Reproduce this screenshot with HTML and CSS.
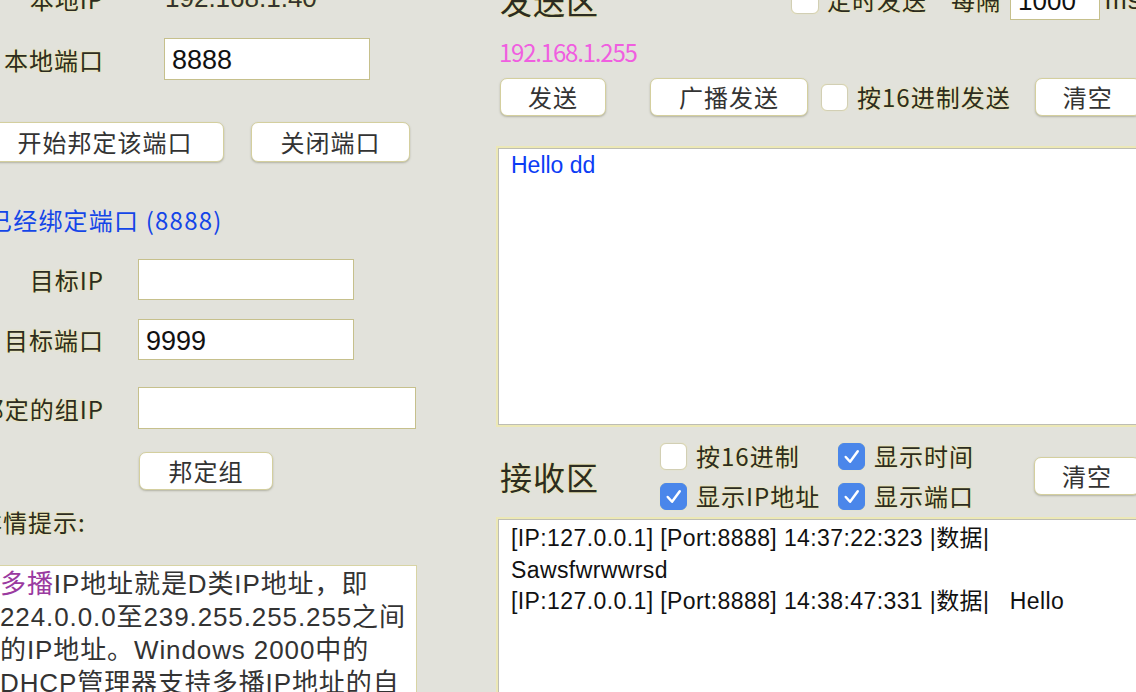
FILE: index.html
```html
<!DOCTYPE html>
<html lang="zh-CN">
<head>
<meta charset="utf-8">
<title>UDP 调试</title>
<link rel="stylesheet" href="styles.css">
</head>
<body>
<div class="app">
  <section class="left">
    <div class="row row-ip">
      <span class="label">本地IP</span>
      <span class="ip-value">192.168.1.40</span>
    </div>
    <div class="row row-port">
      <span class="label">本地端口</span>
      <input class="field field-port" type="text" value="8888">
    </div>
    <div class="row row-btns">
      <button class="btn btn-bind">开始邦定该端口</button>
      <button class="btn btn-close">关闭端口</button>
    </div>
    <div class="status">已经绑定端口 (8888)</div>
    <div class="row row-target first">
      <span class="label">目标IP</span>
      <input class="field field-target" type="text" value="">
    </div>
    <div class="row row-target second">
      <span class="label">目标端口</span>
      <input class="field field-target" type="text" value="9999">
    </div>
    <div class="row row-target group">
      <span class="label">邦定的组IP</span>
      <input class="field field-group" type="text" value="">
    </div>
    <div class="row row-groupbtn">
      <button class="btn btn-group">邦定组</button>
    </div>
    <div class="hint-title">详情提示:</div>
    <div class="hint-box">
      <span class="hl">多播</span>IP地址就是D类IP地址，即<br>224.0.0.0至239.255.255.255之间<br>的IP地址。Windows 2000中的<br>DHCP管理器支持多播IP地址的自<br>动分配。
    </div>
  </section>

  <section class="right">
    <div class="rrow rrow-top">
      <h2 class="title">发送区</h2>
      <span class="check timer-check"></span>
      <span class="clabel timer-label">定时发送</span>
      <span class="clabel every">每隔</span>
      <input class="field field-ms" type="text" value="1000">
      <span class="clabel ms">ms</span>
    </div>
    <div class="bcast">192.168.1.255</div>
    <div class="rrow rrow-send">
      <button class="btn btn-send">发送</button>
      <button class="btn btn-bcast">广播发送</button>
      <span class="check hex-check"></span>
      <span class="clabel hex-label">按16进制发送</span>
      <button class="btn btn-clear">清空</button>
    </div>
    <div class="textbox sendbox"><span class="sendtext">Hello dd</span></div>
    <div class="rrow rrow-recv">
      <h2 class="title">接收区</h2>
      <div class="opts">
        <label class="opt"><span class="check"></span><span class="clabel">按16进制</span></label>
        <label class="opt"><span class="check on"><svg viewBox="0 0 26 26"><path d="M7 13.5 L11.5 18.5 L19.5 7.5"/></svg></span><span class="clabel">显示时间</span></label>
        <label class="opt"><span class="check on"><svg viewBox="0 0 26 26"><path d="M7 13.5 L11.5 18.5 L19.5 7.5"/></svg></span><span class="clabel">显示IP地址</span></label>
        <label class="opt"><span class="check on"><svg viewBox="0 0 26 26"><path d="M7 13.5 L11.5 18.5 L19.5 7.5"/></svg></span><span class="clabel">显示端口</span></label>
      </div>
      <button class="btn btn-clear2">清空</button>
    </div>
    <div class="textbox recvbox">
      <div class="line">[IP:127.0.0.1] [Port:8888] 14:37:22:323 |数据|</div>
      <div class="line">Sawsfwrwwrsd</div>
      <div class="line">[IP:127.0.0.1] [Port:8888] 14:38:47:331 |数据|&nbsp;&nbsp; Hello</div>
    </div>
  </section>
</div>
</body>
</html>
```

FILE: styles.css
```css
html, body {
  margin: 0;
  padding: 0;
}
body {
  width: 1136px;
  height: 692px;
  overflow: hidden;
  background: #e2e2db;
  font-family: "Noto Sans CJK SC", "Liberation Sans", sans-serif;
  color: #2c2c22;
}
.app {
  display: flex;
  align-items: flex-start;
  margin-top: -22px;
  margin-left: -30px;
}
.left {
  width: 447px;
  flex: none;
  display: flex;
  flex-direction: column;
}
.right {
  width: 720px;
  flex: none;
  margin-left: 81px;
  padding-top: 2px;
  display: flex;
  flex-direction: column;
}
.label, .clabel, .title, .status, .hint-title, .ip-value {
  white-space: nowrap;
  text-shadow: 0 0 2px rgba(246, 236, 150, 0.95), 0 0 1px rgba(246, 236, 150, 0.9);
}
.row {
  display: flex;
  align-items: center;
}
.label {
  width: 134px;
  flex: none;
  text-align: right;
  font-size: 24px;
  letter-spacing: 1px;
  margin-right: -1px;
}
.row-ip {
  height: 40px;
}
.ip-value {
  margin-left: 62px;
  font-family: "Liberation Sans", sans-serif;
  font-size: 26px;
  color: #333;
}
.field {
  box-sizing: border-box;
  border: 1px solid #c6c08c;
  background: #fff;
  margin: 0;
  padding: 3px 7px 0;
  font-family: "Liberation Sans", sans-serif;
  font-size: 27px;
  color: #111;
  outline: none;
  border-radius: 0;
}
.row-port {
  margin-top: 20px;
}
.field-port {
  margin-left: 61px;
  width: 206px;
  height: 42px;
}
.btn {
  box-sizing: border-box;
  flex: none;
  background: #fff;
  border: 1px solid #d4cf9e;
  border-radius: 7px;
  box-shadow: 0 1px 2px rgba(90, 90, 60, 0.35);
  font-family: "Noto Sans CJK SC", sans-serif;
  font-size: 24px;
  letter-spacing: 1px;
  color: #333;
  padding: 0;
  margin: 0;
  height: 40px;
  line-height: 36px;
}
.row-btns {
  margin-top: 42px;
}
.btn-bind {
  margin-left: 16px;
  width: 238px;
}
.btn-close {
  margin-left: 27px;
  width: 159px;
}
.status {
  margin-top: 41px;
  margin-left: 18px;
  font-size: 24px;
  letter-spacing: 1.2px;
  line-height: 34px;
  color: #1446e8;
  text-shadow: none;
}
.field-target {
  margin-left: 35px;
  width: 216px;
  height: 41px;
}
.row-target.first {
  margin-top: 22px;
}
.row-target.second {
  margin-top: 19px;
}
.row-target.group {
  margin-top: 27px;
}
.field-group {
  margin-left: 35px;
  width: 278px;
  height: 42px;
}
.row-groupbtn {
  margin-top: 23px;
}
.btn-group {
  margin-left: 169px;
  width: 134px;
  height: 38px;
  line-height: 34px;
}
.hint-title {
  margin-top: 15px;
  margin-left: 8px;
  font-size: 24px;
  letter-spacing: 1px;
  line-height: 34px;
}
.hint-box {
  box-sizing: border-box;
  margin-top: 26px;
  height: 200px;
  background: #fff;
  border: 1px solid #d8d4a4;
  padding: 2px 0 0 29px;
  font-family: "Liberation Sans", "Noto Sans CJK SC", sans-serif;
  font-size: 26px;
  line-height: 33px;
  letter-spacing: 0.9px;
  color: #333;
  white-space: nowrap;
}
.hl {
  color: #9a3aa0;
}

/* right column */
.rrow {
  display: flex;
  align-items: center;
}
.rrow-top {
  height: 40px;
}
.title {
  margin: 0 0 0 2px;
  font-weight: normal;
  font-size: 32px;
  letter-spacing: 1px;
  line-height: 40px;
}
.check {
  box-sizing: border-box;
  flex: none;
  width: 27px;
  height: 27px;
  border: 1px solid #d2cfb4;
  border-radius: 6px;
  background: #fff;
  box-shadow: 0 0 1px rgba(240, 230, 150, 0.9);
  display: flex;
  align-items: center;
  justify-content: center;
}
.check.on {
  background: #4a86ea;
  border-color: #4a86ea;
}
.check svg {
  width: 25px;
  height: 25px;
  fill: none;
  stroke: #fff;
  stroke-width: 2.6;
  stroke-linecap: round;
  stroke-linejoin: round;
}
.clabel {
  font-size: 24px;
  letter-spacing: 1px;
  line-height: 30px;
}
.timer-check {
  margin-left: 192px;
  width: 28px;
  height: 28px;
}
.timer-label {
  margin-left: 8px;
}
.every {
  margin-left: 24px;
}
.field-ms {
  margin-left: 9px;
  width: 90px;
  height: 40px;
  font-size: 26px;
}
.ms {
  margin-left: 5px;
  font-family: "Liberation Sans", sans-serif;
  font-size: 26px;
}
.bcast {
  margin-top: 17px;
  margin-left: 1px;
  font-size: 24px;
  line-height: 30px;
  letter-spacing: -1.2px;
  color: #f05ee0;
  font-weight: 400;
}
.rrow-send {
  margin-top: 11px;
  height: 38px;
}
.btn-send {
  margin-left: 2px;
  width: 106px;
  height: 38px;
  line-height: 34px;
}
.btn-bcast {
  margin-left: 44px;
  width: 158px;
  height: 38px;
  line-height: 34px;
}
.hex-check {
  margin-left: 13px;
}
.hex-label {
  margin-left: 9px;
}
.btn-clear {
  margin-left: 24px;
  width: 106px;
  height: 38px;
  line-height: 34px;
}
.textbox {
  box-sizing: border-box;
  background: #fff;
  border: 1px solid #bdbdb4;
  box-shadow: 0 0 0 2px #ece8b6;
  margin-left: 0;
  font-family: "Liberation Sans", "Noto Sans CJK SC", sans-serif;
  white-space: nowrap;
}
.sendbox {
  margin-top: 32px;
  height: 277px;
  padding: 0 0 0 12px;
  font-size: 23px;
  line-height: 32px;
  color: #0b3cf5;
}
.rrow-recv {
  margin-top: 15px;
  height: 72px;
}
.opts {
  margin-left: 61px;
  display: grid;
  grid-template-columns: 178px 197px;
  row-gap: 13px;
}
.opt {
  display: flex;
  align-items: center;
  height: 27px;
}
.opt .clabel {
  margin-left: 9px;
}
.btn-clear2 {
  margin-left: -1px;
  width: 106px;
  height: 38px;
  line-height: 34px;
}
.recvbox {
  margin-top: 7px;
  height: 200px;
  padding: 3px 0 0 12px;
  font-size: 23px;
  line-height: 31.5px;
  letter-spacing: 0.4px;
  color: #111;
}
```
